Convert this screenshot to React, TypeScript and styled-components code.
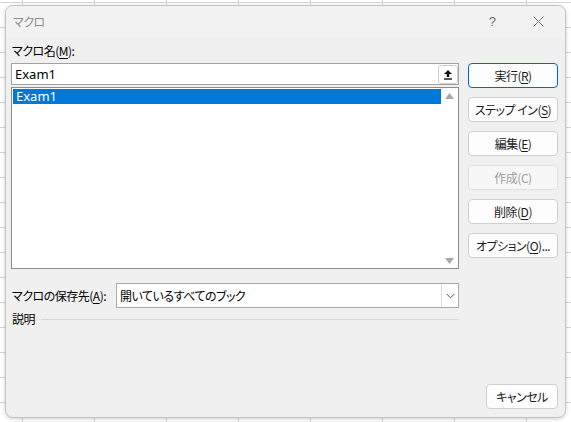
import React from "react";
import styled, { createGlobalStyle } from "styled-components";

const Global = createGlobalStyle`
  html, body { margin: 0; padding: 0; }
  body {
    font-family: "Noto Sans CJK JP", "Noto Sans", sans-serif;
    font-size: 12px;
    color: #000;
    background: #fff;
    font-feature-settings: "palt" 1;
    letter-spacing: -0.5px;
  }
`;

const Desktop = styled.div`
  width: 571px;
  height: 422px;
  box-sizing: border-box;
  padding: 5px;
  background-color: #ffffff;
  background-image:
    linear-gradient(to right, #d6d6d6 1px, transparent 1px),
    linear-gradient(to bottom, #d6d6d6 1px, transparent 1px);
  background-size: 72px 25px;
  background-position: 22px 2px;
  overflow: hidden;
`;

const Dialog = styled.div`
  width: 561px;
  height: 413px;
  box-sizing: border-box;
  border: 1px solid #c4c4c4;
  border-radius: 8px;
  background: #f0f0f0;
  box-shadow: 0 1px 4px rgba(0, 0, 0, 0.18);
  display: flex;
  flex-direction: column;
  overflow: hidden;
`;

const TitleBar = styled.div`
  height: 31px;
  display: flex;
  align-items: center;
  padding-left: 7px;
  background: #f2f2f2;
  flex-shrink: 0;
`;

const Title = styled.div`
  flex: 1;
  color: #8f8f8f;
  font-size: 12px;
`;

const TitleBtn = styled.div<{ $w: number }>`
  width: ${(p) => p.$w}px;
  height: 31px;
  display: flex;
  align-items: center;
  justify-content: center;
  color: #6e6e6e;
  font-family: "Liberation Sans", sans-serif;
  font-size: 13px;
`;

const Body = styled.div`
  flex: 1;
  display: flex;
  flex-direction: column;
  padding: 5px 7px 8px 5px;
`;

const Main = styled.div`
  display: flex;
  gap: 9px;
`;

const LeftCol = styled.div`
  width: 448px;
  display: flex;
  flex-direction: column;
`;

const Label = styled.div`
  height: 17px;
  line-height: 17px;
  padding-left: 1px;
  white-space: nowrap;
`;

const Input = styled.div`
  margin-top: 4px;
  height: 22px;
  box-sizing: border-box;
  border: 1px solid #a2a2a2;
  background: #fff;
  display: flex;
  align-items: center;
  padding-left: 3px;
`;

const InputText = styled.div`
  flex: 1;
  font-family: "Noto Sans", "Noto Sans CJK JP", sans-serif;
  font-size: 13px;
  letter-spacing: 0;
`;

const MiniBtn = styled.div`
  width: 20px;
  height: 19px;
  box-sizing: border-box;
  border: 1px solid #cfcfcf;
  border-radius: 3px;
  display: flex;
  align-items: center;
  justify-content: center;
`;

const ListBox = styled.div`
  margin-top: 2px;
  height: 182px;
  box-sizing: border-box;
  border: 1px solid #8c8c8c;
  background: #fff;
  display: flex;
`;

const ListItems = styled.div`
  flex: 1;
  padding: 1px 0 0 1px;
`;

const ListItem = styled.div<{ $sel?: boolean }>`
  height: 15px;
  line-height: 15px;
  padding-left: 3px;
  background: ${(p) => (p.$sel ? "#0078d7" : "transparent")};
  color: ${(p) => (p.$sel ? "#fff" : "#000")};
  font-family: "Noto Sans", "Noto Sans CJK JP", sans-serif;
  font-size: 13px;
  letter-spacing: 0;
`;

const ScrollBar = styled.div`
  width: 17px;
  display: flex;
  flex-direction: column;
  justify-content: space-between;
  align-items: center;
  padding: 5px 0 4px;
  background: #fff;
`;

const SaveRow = styled.div`
  margin-top: 14px;
  display: flex;
  align-items: center;
`;

const SaveLabel = styled.div`
  width: 104px;
  padding-left: 1px;
  white-space: nowrap;
`;

const Select = styled.div`
  flex: 1;
  height: 25px;
  box-sizing: border-box;
  border: 1px solid #a9a9a9;
  background: #fff;
  display: flex;
  align-items: center;
`;

const SelectText = styled.div`
  flex: 1;
  padding-left: 3px;
`;

const SelectArrow = styled.div`
  width: 16px;
  height: 23px;
  border-left: 1px solid #dcdcdc;
  display: flex;
  align-items: center;
  justify-content: center;
`;

const DescRow = styled.div`
  margin-top: 2px;
  display: flex;
  align-items: center;
  gap: 6px;
`;

const DescLine = styled.div`
  flex: 1;
  height: 1px;
  background: #dadada;
  margin-top: 1px;
`;

const RightCol = styled.div`
  width: 90px;
  padding-top: 21px;
  display: flex;
  flex-direction: column;
  gap: 9px;
`;

const Button = styled.div<{ $default?: boolean; $disabled?: boolean; $w?: number }>`
  width: ${(p) => (p.$w ? `${p.$w}px` : "100%")};
  height: 25px;
  box-sizing: border-box;
  border: 1px solid
    ${(p) => (p.$default ? "#0067c0" : p.$disabled ? "#e0e0e0" : "#d0d0d0")};
  border-radius: 4px;
  background: ${(p) => (p.$disabled ? "#f7f7f7" : "#fdfdfd")};
  color: ${(p) => (p.$disabled ? "#9d9d9d" : "#1a1a1a")};
  display: flex;
  align-items: center;
  justify-content: center;
  white-space: nowrap;
`;

const Footer = styled.div`
  margin-top: auto;
  display: flex;
  justify-content: flex-end;
`;

const U = styled.span`
  text-decoration: underline;
  text-underline-offset: 2px;
`;

const Spacer = styled.div`
  width: 4px;
`;

const UpIcon = () => (
  <svg width="10" height="11" viewBox="0 0 10 11">
    <path d="M5 1 L9 5 H6.3 V8 H3.7 V5 H1 Z" fill="#111" />
    <rect x="1" y="9.3" width="8" height="1.4" fill="#111" />
  </svg>
);

const Tri = ({ down }: { down?: boolean }) => (
  <svg width="9" height="6" viewBox="0 0 9 6">
    <path d={down ? "M0 0 H9 L4.5 6 Z" : "M0 6 H9 L4.5 0 Z"} fill="#a8a8a8" />
  </svg>
);

const Chevron = () => (
  <svg width="9" height="6" viewBox="0 0 9 6">
    <path d="M0.5 0.8 L4.5 4.8 L8.5 0.8" stroke="#555" strokeWidth="1" fill="none" />
  </svg>
);

const CloseIcon = () => (
  <svg width="11" height="11" viewBox="0 0 11 11">
    <path d="M0.5 0.5 L10.5 10.5 M10.5 0.5 L0.5 10.5" stroke="#7a7a7a" strokeWidth="1" />
  </svg>
);

export default function App() {
  return (
    <>
      <Global />
      <Desktop>
        <Dialog>
          <TitleBar>
            <Title>マクロ</Title>
            <TitleBtn $w={46}>?</TitleBtn>
            <TitleBtn $w={46}>
              <CloseIcon />
            </TitleBtn>
            <Spacer />
          </TitleBar>
          <Body>
            <Main>
              <LeftCol>
                <Label>
                  マクロ名(<U>M</U>):
                </Label>
                <Input>
                  <InputText>Exam1</InputText>
                  <MiniBtn>
                    <UpIcon />
                  </MiniBtn>
                </Input>
                <ListBox>
                  <ListItems>
                    <ListItem $sel>Exam1</ListItem>
                  </ListItems>
                  <ScrollBar>
                    <Tri />
                    <Tri down />
                  </ScrollBar>
                </ListBox>
                <SaveRow>
                  <SaveLabel>
                    マクロの保存先(<U>A</U>):
                  </SaveLabel>
                  <Select>
                    <SelectText>開いているすべてのブック</SelectText>
                    <SelectArrow>
                      <Chevron />
                    </SelectArrow>
                  </Select>
                </SaveRow>
                <DescRow>
                  <Label>説明</Label>
                  <DescLine />
                </DescRow>
              </LeftCol>
              <RightCol>
                <Button $default>
                  実行(<U>R</U>)
                </Button>
                <Button>
                  ステップ イン(<U>S</U>)
                </Button>
                <Button>
                  編集(<U>E</U>)
                </Button>
                <Button $disabled>作成(C)</Button>
                <Button>
                  削除(<U>D</U>)
                </Button>
                <Button>
                  オプション(<U>O</U>)...
                </Button>
              </RightCol>
            </Main>
            <Footer>
              <Button $w={72}>キャンセル</Button>
            </Footer>
          </Body>
        </Dialog>
      </Desktop>
    </>
  );
}
